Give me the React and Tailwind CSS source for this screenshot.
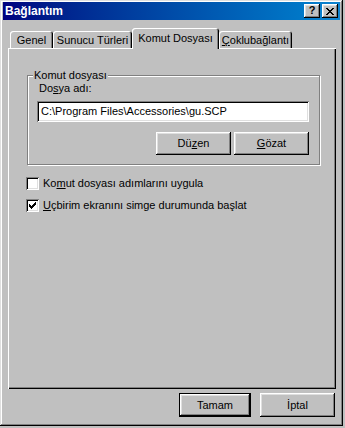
import React from 'react';

const raised =
  'shadow-[inset_-1px_-1px_0_#000,inset_1px_1px_0_#fff,inset_-2px_-2px_0_#808080,inset_2px_2px_0_#dfdfdf]';
const sunken =
  'shadow-[inset_1px_1px_0_#808080,inset_-1px_-1px_0_#fff,inset_2px_2px_0_#000,inset_-2px_-2px_0_#dfdfdf]';

const checkRows = [
  [9, 3, 1], [8, 4, 2], [3, 5, 1], [7, 5, 3], [3, 6, 2], [6, 6, 3], [3, 7, 5], [4, 8, 3], [5, 9, 1],
];

const Checkbox = ({ checked }) => (
  <div className={`w-[13px] h-[13px] bg-white shrink-0 ${sunken}`}>
    {checked && (
      <svg width="13" height="13" viewBox="0 0 13 13" shapeRendering="crispEdges">
        {checkRows.map(([x, y, w]) => (
          <rect key={`${x}-${y}`} x={x} y={y} width={w} height="1" fill="#000" />
        ))}
      </svg>
    )}
  </div>
);

const Button = ({ children, className = '' }) => (
  <div className={`flex items-center justify-center bg-[#c0c0c0] ${raised} ${className}`}>{children}</div>
);

const Tab = ({ label, width, active }) =>
  active ? (
    <div
      className="relative z-10 -mb-px h-[21px] rounded-t-[3px] bg-[#c0c0c0] flex justify-center pt-[5px] shadow-[inset_1px_1px_0_#fff,inset_-1px_0_0_#000,inset_-2px_0_0_#808080]"
      style={{ width }}
    >
      {label}
    </div>
  ) : (
    <div
      className="h-[17px] rounded-t-[3px] bg-[#c0c0c0] flex justify-center pt-[4px] shadow-[inset_1px_1px_0_#fff,inset_-1px_0_0_#000,inset_-2px_0_0_#808080]"
      style={{ width }}
    >
      {label}
    </div>
  );

export default function App() {
  return (
    <div className="w-[345px] h-[428px] bg-[#c0c0c0] font-['Liberation_Sans',Arial,sans-serif] text-[11px] leading-[11px] text-black select-none">
      <div className="w-[343px] h-[426px] flex flex-col px-[3px] pt-[2px] shadow-[inset_-1px_-1px_0_#000,inset_1px_1px_0_#dfdfdf,inset_-2px_-2px_0_#808080,inset_2px_2px_0_#fff]">
        {/* title bar */}
        <div className="h-[18px] flex items-center bg-linear-to-r from-[#000080] to-[#1084d0] pl-[2px] pr-[2px]">
          <span className="text-white font-bold text-[12px] leading-[12px] flex-1">Bağlantım</span>
          <Button className="w-[16px] h-[14px] text-[11px] font-bold">
            <span className="-mt-px">?</span>
          </Button>
          <Button className="w-[16px] h-[14px] ml-[2px]">
            <svg width="8" height="7" viewBox="0 0 8 7" shapeRendering="crispEdges">
              <path d="M0 0h2v1h-2zM6 0h2v1h-2zM1 1h2v1h-2zM5 1h2v1h-2zM2 2h4v1h-4zM3 3h2v1h-2zM2 4h4v1h-4zM1 5h2v1h-2zM5 5h2v1h-2zM0 6h2v1h-2zM6 6h2v1h-2z" fill="#000" />
            </svg>
          </Button>
        </div>

        {/* tabs */}
        <div className="h-[28px] flex items-end pl-[7px]">
          <Tab label="Genel" width={43} />
          <Tab label="Sunucu Türleri" width={79} />
          <Tab label="Komut Dosyası" width={87} active />
          <Tab
            label={
              <span>
                <span className="underline">Ç</span>oklubağlantı
              </span>
            }
            width={73}
          />
        </div>

        {/* panel */}
        <div className="ml-[5px] w-[328px] h-[341px] pl-[19px] pt-[27px] shadow-[inset_1px_1px_0_#fff,inset_-1px_-1px_0_#000,inset_-2px_-2px_0_#808080]">
          <div className="relative w-[293px] h-[90px] border border-[#808080] shadow-[inset_1px_1px_0_#fff,1px_1px_0_#fff] pl-[9px] pt-[7px]">
            <span className="absolute left-[5px] top-[-6px] bg-[#c0c0c0] px-[1px]">Komut dosyası</span>
            <div className="pl-[2px] h-[11px]">
              Do<span className="underline">s</span>ya adı:
            </div>
            <div className={`mt-[7px] w-[272px] h-[21px] bg-white flex items-center pl-[4px] ${sunken}`}>
              C:\Program Files\Accessories\gu.SCP
            </div>
            <div className="w-[272px] mt-[10px] flex justify-end gap-[3px]">
              <Button className="w-[75px] h-[23px]">
                Dü<span className="underline">z</span>en
              </Button>
              <Button className="w-[75px] h-[23px]">
                <span className="underline">G</span>özat
              </Button>
            </div>
          </div>

          <div className="mt-[12px] -ml-px flex flex-col gap-[9px]">
            <div className="flex items-center gap-[4px] h-[13px]">
              <Checkbox />
              <span>
                Ko<span className="underline">m</span>ut dosyası adımlarını uygula
              </span>
            </div>
            <div className="flex items-center gap-[4px] h-[13px]">
              <Checkbox checked />
              <span>
                <span className="underline">U</span>çbirim ekranını simge durumunda başlat
              </span>
            </div>
          </div>
        </div>

        {/* dialog buttons */}
        <div className="mt-[4px] flex justify-end gap-[9px] pr-[5px]">
          <div className="w-[72px] h-[24px] border border-black">
            <Button className="w-full h-full">Tamam</Button>
          </div>
          <Button className="w-[75px] h-[24px]">İptal</Button>
        </div>
      </div>
    </div>
  );
}
